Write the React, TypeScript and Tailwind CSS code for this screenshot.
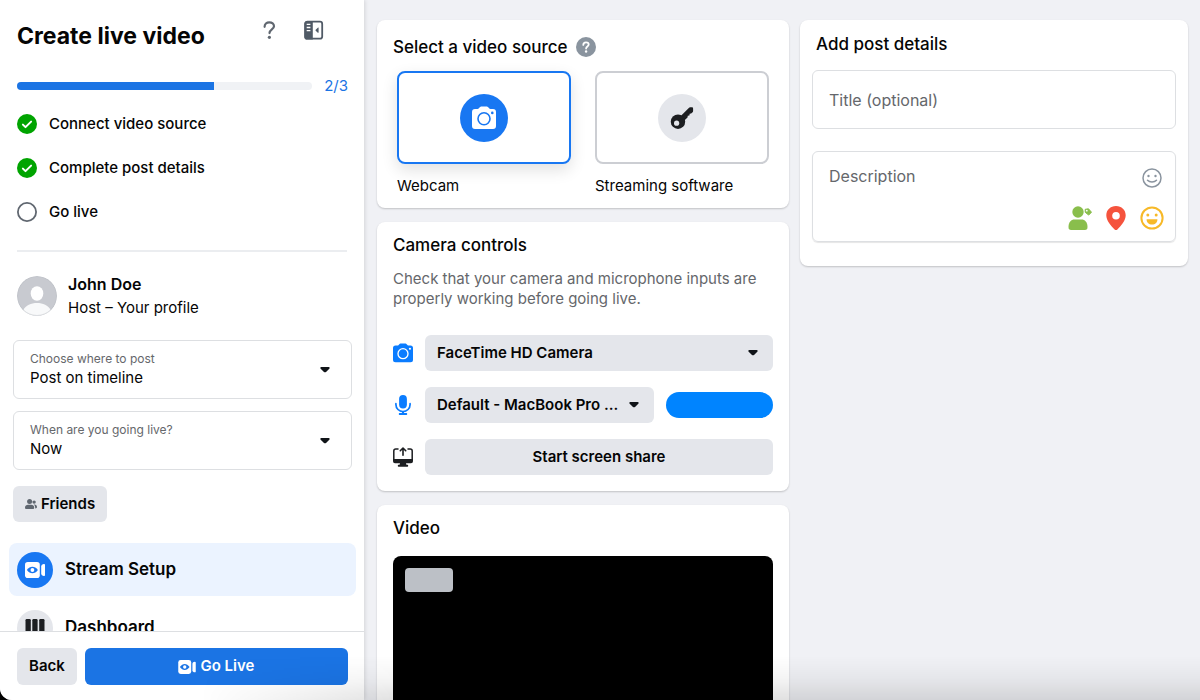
import React, { useState } from 'react';

type IconProps = { className?: string };

const CaretIcon: React.FC<IconProps> = ({ className = '' }) => (
  <svg className={`pointer-events-none h-3 w-3 ${className}`} viewBox="0 0 12 12" fill="#101418">
    <path d="M2.300 3h7.400c1 0 1.300 1 .6 1.700L7 7.900c-.6.6-1.400.6-2 0L1.700 4.700C1 4 1.300 3 2.300 3z" />
  </svg>
);

const CheckIcon = () => (
  <svg className="h-5 w-5" viewBox="0 0 20 20">
    <circle cx="10" cy="10" r="10" fill="#00a400" />
    <path d="M5.900 10.600l2.600 2.500 5.600-5.500" fill="none" stroke="#fff" strokeWidth="2" strokeLinecap="round" strokeLinejoin="round" />
  </svg>
);

const CircleIcon = () => (
  <svg className="h-5 w-5" viewBox="0 0 20 20">
    <circle cx="10" cy="10" r="9.100" fill="none" stroke="#606770" strokeWidth="1.800" />
  </svg>
);

const QuestionIcon = () => (
  <svg className="h-5 w-5" viewBox="0 0 20 20">
    <path d="M4.600 6.800C4.600 4 6.600 2.300 9.300 2.300s4.700 1.600 4.700 3.900c0 3.100-4.500 3.300-4.500 6.900" fill="none" stroke="#606770" strokeWidth="2.200" strokeLinecap="round" />
    <circle cx="9.400" cy="17.300" r="1.600" fill="#606770" />
  </svg>
);

const PanelIcon = () => (
  <svg className="h-5 w-5" viewBox="0 0 20 20">
    <rect x="1.200" y="1.700" width="17" height="17" rx="2.200" fill="#fff" stroke="#505a66" strokeWidth="1.800" />
    <path d="M.4 3.600A2.700 2.700 0 0 1 3.100.9h5.700v18.700H3.100a2.700 2.700 0 0 1-2.700-2.700z" fill="#505a66" />
    <path d="M2.700 4.300h3.700M2.700 7.500h3.700M2.700 10.700h3.700" stroke="#fff" strokeWidth="1.300" />
    <path d="M14.600 8v4.400c0 .5-.4.600-.8.300l-2.100-2c-.3-.3-.3-.7 0-1l2.100-2c.4-.3.8-.2.8.300z" fill="#505a66" />
  </svg>
);

const HelpBadge = () => (
  <svg className="h-5 w-5" viewBox="0 0 20 20">
    <circle cx="10" cy="10" r="10" fill="#8a949f" />
    <path d="M7.300 7.900c0-1.700 1.100-2.600 2.700-2.600s2.700.9 2.700 2.300c0 1.900-2.600 2-2.600 4" fill="none" stroke="#fff" strokeWidth="1.800" strokeLinecap="round" />
    <circle cx="10.100" cy="14.500" r="1.200" fill="#fff" />
  </svg>
);

const AvatarIcon = () => (
  <svg className="h-10 w-10 rounded-full" viewBox="0 0 40 40">
    <circle cx="20" cy="20" r="20" fill="#c8cad0" />
    <ellipse cx="20" cy="17.500" rx="6.300" ry="7.300" fill="#fff" />
    <path d="M6 34.500C9 29 14 27 20 27s11 2 14 7.500A20 20 0 0 1 20 40 20 20 0 0 1 6 34.500z" fill="#f8f9fa" />
    <circle cx="20" cy="20" r="19.500" fill="none" stroke="#bcc0c6" strokeOpacity=".5" />
  </svg>
);

const FriendsIcon = () => (
  <svg className="h-3 w-3" viewBox="0 0 12 12" fill="#606770">
    <circle cx="4.600" cy="3.400" r="2.500" />
    <path d="M0 9.400C0 7.600 1.500 6.700 3 6.700h3.200c1.600 0 3 .9 3 2.700 0 1.400-.5 1.600-1.400 1.600H1.400C.5 11 0 10.800 0 9.400z" />
    <circle cx="9.100" cy="4.100" r="1.700" />
    <path d="M8.700 6.600c2.200-.3 3.300 1 3.300 2.500 0 .9-.4 1.300-1.800 1.300 0-1.700-.2-2.800-1.500-3.800z" />
  </svg>
);

const LiveCameraIcon: React.FC<IconProps & { eye: string }> = ({ className = '', eye }) => (
  <svg className={className} viewBox="0 0 20 16">
    <rect x="0" y="0" width="14.800" height="16" rx="2.800" fill="#fff" />
    <path d="M16.200 4.400c0-1.600 1.200-2.500 2.700-2.500.7 0 1.100.4 1.100 1v10.200c0 .6-.4 1-1.100 1-1.500 0-2.700-.9-2.700-2.500z" fill="#fff" />
    <path d="M1.900 8C5 3.600 9.800 3.600 12.900 8 9.800 12.400 5 12.400 1.900 8z" fill={eye} />
    <circle cx="7.400" cy="8" r="1.900" fill="#fff" />
  </svg>
);

const BarsIcon = () => (
  <svg className="h-5 w-5" viewBox="0 0 20 20" fill="#1c1e21">
    <rect x="0.500" y="1" width="5.300" height="18" rx="1.200" />
    <rect x="7.300" y="1" width="5.300" height="18" rx="1.200" />
    <rect x="14.200" y="1" width="5.300" height="18" rx="1.200" />
  </svg>
);

const CameraIcon: React.FC<IconProps & { body: string; lens: string }> = ({ className = '', body, lens }) => (
  <svg className={className} viewBox="0 0 24 24">
    <path d="M3 3h2.600c.8 0 1-.3 1.400-.9C7.700 1 8.600.5 9.800.5h4.400c1.200 0 2.100.5 2.800 1.600.4.600.6.900 1.400.9H21a3 3 0 0 1 3 3v14a3 3 0 0 1-3 3H3a3 3 0 0 1-3-3V6a3 3 0 0 1 3-3z" fill={body} />
    <circle cx="12" cy="12.800" r="6" fill="none" stroke={lens} strokeWidth="1.600" />
    <circle cx="20.300" cy="6.900" r="1.300" fill={lens} />
  </svg>
);

const KeyIcon = () => (
  <svg className="h-6 w-6" viewBox="0 0 24 24">
    <path d="M10.500 10.300L18.800 1.900c.4-.4.800-.6 1.300-.6h1.700c.8 0 1.300.5 1.300 1.300v2.500c0 .5-.2.800-.5 1.100l-1.500 1.400-1.400.2-.3 1.700-1.600.2-.3 1.700-2.900 2.900z" fill="#1c1e21" />
    <circle cx="8" cy="15.700" r="7.200" fill="#1c1e21" />
    <circle cx="6.600" cy="17.200" r="2.600" fill="#e4e6eb" />
  </svg>
);

const MicIcon = () => (
  <svg className="h-5 w-5" viewBox="0 0 20 20">
    <rect x="6.100" y="0" width="7.800" height="13.500" rx="3.900" fill="#0a7cff" />
    <path d="M2.900 8.700v.8a7.100 7.100 0 0 0 14.200 0v-.8" fill="none" stroke="#0a7cff" strokeWidth="1.700" strokeLinecap="round" />
    <path d="M9 16h2v2h2.200c.6 0 1 .4 1 1s-.4 1-1 1H6.800c-.6 0-1-.4-1-1s.4-1 1-1H9z" fill="#0a7cff" />
  </svg>
);

const ScreenShareIcon = () => (
  <svg className="h-5 w-5" viewBox="0 0 20 20">
    <path d="M5 2H2.800C1.500 2 .8 2.700.8 4v9M15 2h2.200c1.300 0 2 .7 2 2v9" fill="none" stroke="#1c1e21" strokeWidth="1.500" strokeLinecap="round" />
    <path d="M0 12h20v2.200a2 2 0 0 1-2 2h-5l.4 1.600h.8c.6 0 1 .4 1 1s-.4 1-1 1H5.800c-.6 0-1-.4-1-1s.4-1 1-1h.8l.4-1.600H2a2 2 0 0 1-2-2z" fill="#1c1e21" />
    <path d="M10 8.300V1.500M7.300 3.700L10 1l2.700 2.700" fill="none" stroke="#1c1e21" strokeWidth="1.600" strokeLinecap="round" strokeLinejoin="round" />
  </svg>
);

const SmileIcon = () => (
  <svg className="h-5 w-5" viewBox="0 0 20 20">
    <circle cx="10" cy="10" r="9" fill="none" stroke="#8a949f" strokeWidth="1.500" />
    <circle cx="6.500" cy="8" r="1.200" fill="#8a949f" />
    <circle cx="13.500" cy="8" r="1.200" fill="#8a949f" />
    <path d="M5.500 12.300c2.200 2.300 6.800 2.300 9 0" fill="none" stroke="#8a949f" strokeWidth="1.500" strokeLinecap="round" />
  </svg>
);

const TagPeopleIcon = () => (
  <svg className="h-6 w-6" viewBox="0 0 24 24" fill="#89be4c">
    <circle cx="10" cy="6" r="5.700" />
    <path d="M.5 21c0-5 2.600-7.500 6-7.500h7c3.400 0 6 2.500 6 7.500 0 2.300-.8 3-2.600 3H3.100C1.300 24 .5 23.300.5 21z" />
    <path d="M17.200 3.300l3.300-.5 3 3.400-2.800 2.900-3.500-2.800z" stroke="#89be4c" strokeLinejoin="round" />
    <circle cx="18.800" cy="4.700" r=".9" fill="#fff" />
  </svg>
);

const PinIcon = () => (
  <svg className="h-6 w-6" viewBox="0 0 24 24">
    <path d="M12 0c5.600 0 9.700 4 9.700 9.300 0 5.700-4.700 10.500-8.300 14.100-.8.800-2 .8-2.800 0C7 19.800 2.300 15 2.300 9.300 2.300 4 6.400 0 12 0z" fill="#f5533d" />
    <circle cx="12" cy="9.700" r="3.800" fill="#fff" />
  </svg>
);

const FeelingIcon = () => (
  <svg className="h-6 w-6" viewBox="0 0 24 24">
    <circle cx="12" cy="12" r="10.600" fill="none" stroke="#f7b928" strokeWidth="2" />
    <circle cx="7.800" cy="9" r="1.500" fill="#f7b928" />
    <circle cx="16.200" cy="9" r="1.500" fill="#f7b928" />
    <path d="M6.600 13.300h10.800c.3 3-2.200 5.300-5.400 5.300s-5.700-2.300-5.400-5.300z" fill="#f7b928" />
  </svg>
);

const STEPS = [
  { label: 'Connect video source', done: true },
  { label: 'Complete post details', done: true },
  { label: 'Go live', done: false },
];

interface SelectFieldProps {
  id: string;
  label: string;
  options: string[];
}

const SelectField: React.FC<SelectFieldProps> = ({ id, label, options }) => (
  <div className="relative h-[59px] rounded-md border border-[#dddfe2] px-4 pt-[10px]">
    <label htmlFor={id} className="block text-xs leading-4 text-[#65676b]">
      {label}
    </label>
    <select id={id} className="block h-[22px] w-full appearance-none bg-transparent text-[15px] text-[#050505] outline-none">
      {options.map((o) => (
        <option key={o}>{o}</option>
      ))}
    </select>
    <CaretIcon className="absolute top-[23px] right-5" />
  </div>
);

interface DeviceSelectProps {
  label: string;
  value: string;
  className?: string;
}

const DeviceSelect: React.FC<DeviceSelectProps> = ({ label, value, className = '' }) => (
  <div className={`relative ${className}`}>
    <select
      aria-label={label}
      className="h-9 w-full appearance-none rounded-md bg-[#e4e6eb] pr-8 pl-3 text-[15px] font-semibold text-[#050505] outline-none"
    >
      <option>{value}</option>
    </select>
    <CaretIcon className="absolute top-3 right-[14px]" />
  </div>
);

const Sidebar = () => (
  <aside className="z-10 flex w-[364px] shrink-0 flex-col bg-white shadow-[1px_0_4px_rgba(0,0,0,0.12)]">
    <div className="min-h-0 flex-1 overflow-hidden">
      <header className="flex items-start pt-5 pr-10 pl-[17px]">
        <h1 className="flex-1 text-[23px] leading-8 font-bold">Create live video</h1>
        <div className="flex gap-6">
          <button aria-label="Help"><QuestionIcon /></button>
          <button aria-label="Collapse panel"><PanelIcon /></button>
        </div>
      </header>

      <div className="flex items-center gap-3 pt-6 pr-4 pl-[17px]">
        <div className="h-2 flex-1 overflow-hidden rounded-full bg-[#f0f2f5]">
          <div className="h-full w-2/3 bg-[#1b74e4]" />
        </div>
        <span className="text-[15px] leading-5 text-[#1b74e4]">2/3</span>
      </div>

      <ul className="space-y-6 px-[17px] pt-[18px]">
        {STEPS.map((step) => (
          <li key={step.label} className="flex items-center gap-3">
            {step.done ? <CheckIcon /> : <CircleIcon />}
            <span className="text-[15px] leading-5 font-medium">{step.label}</span>
          </li>
        ))}
      </ul>

      <hr className="mx-[17px] mt-7 border-t-2 border-[#ebedf0]" />

      <div className="flex items-center gap-[11px] px-[17px] pt-5">
        <AvatarIcon />
        <div className="text-[15px] leading-6">
          <p className="text-base font-semibold">John Doe</p>
          <p>Host – Your profile</p>
        </div>
      </div>

      <div className="space-y-3 pt-5 pr-3 pl-[13px]">
        <SelectField id="destination" label="Choose where to post" options={['Post on timeline']} />
        <SelectField id="schedule" label="When are you going live?" options={['Now']} />
      </div>

      <button className="mx-[13px] mt-4 flex h-9 items-center gap-1 rounded-md bg-[#e4e6eb] px-3 text-[15px] font-semibold">
        <FriendsIcon />
        Friends
      </button>

      <nav className="space-y-[5px] pt-[21px] pr-2 pl-[9px]">
        <a href="#setup" className="flex h-[53px] items-center gap-3 rounded-lg bg-[#ebf3ff] px-2 text-[17px] font-semibold">
          <span className="flex h-9 w-9 items-center justify-center rounded-full bg-[#1877f2]">
            <LiveCameraIcon className="h-4 w-5" eye="#1877f2" />
          </span>
          Stream Setup
        </a>
        <a href="#dashboard" className="flex h-[53px] items-center gap-3 rounded-lg px-2 text-[17px] font-semibold">
          <span className="flex h-9 w-9 items-center justify-center rounded-full bg-[#e4e6eb]">
            <BarsIcon />
          </span>
          Dashboard
        </a>
      </nav>
    </div>

    <footer className="flex gap-2 border-t border-[#dddfe2] pt-4 pr-4 pb-[15px] pl-[17px]">
      <button className="h-[37px] rounded-md bg-[#e4e6eb] px-3 text-[15px] font-semibold">Back</button>
      <button className="flex h-[37px] flex-1 items-center justify-center gap-1 rounded-md bg-[#1b74e4] text-[15px] font-semibold text-white">
        <LiveCameraIcon className="h-[14px] w-[18px]" eye="#1b74e4" />
        Go Live
      </button>
    </footer>
  </aside>
);

interface SourceOptionProps {
  label: string;
  selected: boolean;
  onSelect: () => void;
  children: React.ReactNode;
}

const SourceOption: React.FC<SourceOptionProps> = ({ label, selected, onSelect, children }) => (
  <label className="relative block cursor-pointer">
    <input type="radio" name="source" className="sr-only" checked={selected} onChange={onSelect} />
    <span
      className={`flex h-[93px] items-center justify-center rounded-lg border-2 ${
        selected ? 'border-[#1877f2] shadow-[0_6px_16px_rgba(0,0,0,0.12)]' : 'border-[#ccced3]'
      }`}
    >
      <span className={`flex h-12 w-12 items-center justify-center rounded-full ${selected ? 'bg-[#1877f2]' : 'bg-[#e4e6eb]'}`}>
        {children}
      </span>
    </span>
    <span className="mt-3 block text-[15px] leading-5">{label}</span>
  </label>
);

const App = () => {
  const [source, setSource] = useState('webcam');

  return (
    <div className="h-screen bg-black font-[Inter,sans-serif] text-[#050505]">
      <div className="relative flex h-full overflow-hidden rounded-bl-xl bg-[#f0f1f5]">
        <Sidebar />

        <main className="grid min-w-0 flex-1 grid-cols-[412fr_388fr] items-start gap-[11px] pt-5 pr-3 pl-[13px]">
          <div className="space-y-[14px]">
            <section className="rounded-lg bg-white px-4 pt-[15px] pb-3 shadow-[0_1px_2px_rgba(0,0,0,0.2)]">
              <h2 className="flex items-center gap-2 text-[17px] leading-6 font-medium">
                Select a video source
                <button aria-label="About video sources"><HelpBadge /></button>
              </h2>
              <div className="mt-3 grid grid-cols-2 gap-6 px-1">
                <SourceOption label="Webcam" selected={source === 'webcam'} onSelect={() => setSource('webcam')}>
                  <CameraIcon className="h-6 w-6" body="#fff" lens="#1877f2" />
                </SourceOption>
                <SourceOption label="Streaming software" selected={source === 'software'} onSelect={() => setSource('software')}>
                  <KeyIcon />
                </SourceOption>
              </div>
            </section>

            <section className="rounded-lg bg-white px-4 pt-[11px] pb-4 shadow-[0_1px_2px_rgba(0,0,0,0.2)]">
              <h2 className="text-[17px] leading-6 font-medium">Camera controls</h2>
              <p className="mt-3 text-[15px] leading-5 text-[#65676b]">
                Check that your camera and microphone inputs are properly working before going live.
              </p>
              <div className="mt-[26px] space-y-4">
                <div className="flex items-center gap-3">
                  <CameraIcon className="h-5 w-5 shrink-0" body="#0a7cff" lens="#fff" />
                  <DeviceSelect label="Camera" value="FaceTime HD Camera" className="flex-1" />
                </div>
                <div className="flex items-center gap-3">
                  <MicIcon />
                  <DeviceSelect label="Microphone" value="Default - MacBook Pro ..." className="flex-1" />
                  <div role="meter" aria-label="Microphone level" aria-valuenow={100} className="h-[26px] w-[107px] rounded-full bg-[#0084ff]" />
                </div>
                <div className="flex items-center gap-3">
                  <ScreenShareIcon />
                  <button className="h-9 flex-1 rounded-md bg-[#e4e6eb] text-[15px] font-semibold">Start screen share</button>
                </div>
              </div>
            </section>

            <section className="rounded-lg bg-white px-4 pt-[11px] pb-4 shadow-[0_1px_2px_rgba(0,0,0,0.2)]">
              <h2 className="text-[17px] leading-6 font-medium">Video</h2>
              <div className="mt-4 aspect-video rounded-lg bg-black p-3">
                <div className="h-6 w-12 rounded bg-[#bcc0c6]" />
              </div>
            </section>
          </div>

          <section className="rounded-lg bg-white px-3 pt-3 pb-6 shadow-[0_1px_2px_rgba(0,0,0,0.2)]">
            <h2 className="px-1 text-[17px] leading-6 font-medium">Add post details</h2>
            <input
              type="text"
              aria-label="Title (optional)"
              placeholder="Title (optional)"
              className="mt-[14px] h-[59px] w-full rounded-md border border-[#dddfe2] px-4 text-base outline-none placeholder:text-[#65676b]"
            />
            <div className="mt-[22px] rounded-md border border-[#dddfe2] pt-3 pr-[11px] pb-[11px] pl-4 shadow-[0_1px_1px_rgba(0,0,0,0.1)]">
              <div className="flex items-end gap-2 pr-[2px]">
                <textarea
                  rows={1}
                  aria-label="Description"
                  placeholder="Description"
                  className="h-6 flex-1 resize-none text-base leading-6 outline-none placeholder:text-[#65676b]"
                />
                <button aria-label="Insert emoji"><SmileIcon /></button>
              </div>
              <div className="mt-[18px] flex justify-end gap-3">
                <button aria-label="Tag people"><TagPeopleIcon /></button>
                <button aria-label="Check in"><PinIcon /></button>
                <button aria-label="Feeling or activity"><FeelingIcon /></button>
              </div>
            </div>
          </section>
        </main>

        {/* soft shade along the bottom edge */}
        <div className="pointer-events-none absolute right-0 bottom-0 left-[200px] z-20 h-11 bg-linear-to-t from-black/12 via-black/4 to-transparent mask-l-from-80% mask-l-to-100%" />
      </div>
    </div>
  );
};

export default App;
